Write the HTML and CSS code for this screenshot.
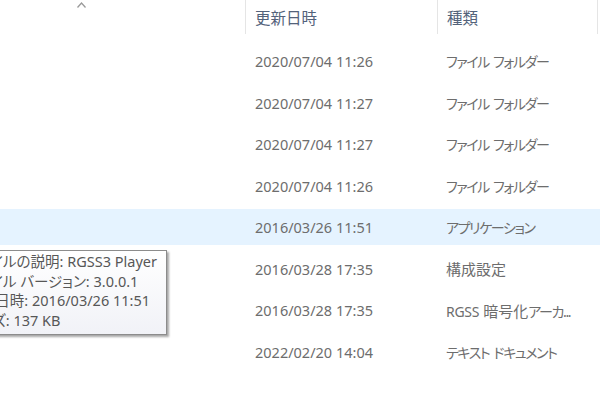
FILE: index.html
```html
<!DOCTYPE html>
<html lang="ja">
  <head>
    <meta charset="UTF-8" />
    <title>エクスプローラー</title>
    <link rel="stylesheet" href="styles.css">
  </head>
  <body>
    <div class="explorer">
      <div class="header">
        <div class="col-name">
          <svg class="sort-caret" width="9" height="6" viewBox="0 0 9 6">
            <polyline points="0.5,5.5 4.5,1 8.5,5.5" fill="none" stroke="#9a9a9a" stroke-width="1.3" />
          </svg>
        </div>
        <div class="col-date head-cell">更新日時</div>
        <div class="col-type head-cell">種類</div>
        <div class="col-rest head-cell"></div>
      </div>

      <div class="rows">
        <div class="row">
          <div class="col-name"></div>
          <div class="col-date">2020/07/04 11:26</div>
          <div class="col-type">ファイル フォルダー</div>
        </div>
        <div class="row">
          <div class="col-name"></div>
          <div class="col-date">2020/07/04 11:27</div>
          <div class="col-type">ファイル フォルダー</div>
        </div>
        <div class="row">
          <div class="col-name"></div>
          <div class="col-date">2020/07/04 11:27</div>
          <div class="col-type">ファイル フォルダー</div>
        </div>
        <div class="row">
          <div class="col-name"></div>
          <div class="col-date">2020/07/04 11:26</div>
          <div class="col-type">ファイル フォルダー</div>
        </div>
        <div class="row hover">
          <div class="col-name"></div>
          <div class="col-date">2016/03/26 11:51</div>
          <div class="col-type">アプリケーション</div>
        </div>
        <div class="row">
          <div class="col-name"></div>
          <div class="col-date">2016/03/28 17:35</div>
          <div class="col-type"><span class="kanji">構成設定</span></div>
        </div>
        <div class="row">
          <div class="col-name"></div>
          <div class="col-date">2016/03/28 17:35</div>
          <div class="col-type"><span class="latin">RGSS</span> <span class="kanji">暗号化</span>アーカ...</div>
        </div>
        <div class="row">
          <div class="col-name"></div>
          <div class="col-date">2022/02/20 14:04</div>
          <div class="col-type">テキスト ドキュメント</div>
        </div>
      </div>

      <!-- ツールチップ (ホバー中のファイル) -->
      <div class="tooltip">
        <p>ファイルの説明: RGSS3 Player</p>
        <p>ファイル バージョン: 3.0.0.1</p>
        <p>作成日時: 2016/03/26 11:51</p>
        <p>サイズ: 137 KB</p>
      </div>
    </div>
  </body>
</html>
```

FILE: styles.css
```css
body {
  margin: 0;
  background: #ffffff;
  font-family: "Noto Sans", "Noto Sans CJK JP", sans-serif;
  font-feature-settings: "palt";
  overflow: hidden;
}
.explorer {
  position: relative;
  width: 600px;
  height: 400px;
}
.header {
  display: grid;
  grid-template-columns: 245px 192px 160px 3px;
  height: 36px;
  margin-bottom: 7px;
}
.header .col-name {
  display: flex;
  align-items: flex-start;
  padding-left: 77px;
}
.sort-caret {
  margin-top: 2px;
}
.head-cell {
  border-left: 1px solid #e5e5e5;
  height: 34px;
  display: flex;
  align-items: center;
  padding-left: 9px;
  font-size: 15.5px;
  color: #53627a;
}
.rows {
  display: flex;
  flex-direction: column;
  gap: 5.5px;
}
.row {
  display: grid;
  grid-template-columns: 245px 192px 1fr;
  height: 36px;
  align-items: center;
  color: #6d6d6d;
}
.row.hover {
  background-color: #e5f3ff;
}
.row .col-date {
  padding-left: 10px;
  font-size: 14.5px;
}
.row .col-type {
  padding-left: 9px;
  font-size: 14px;
  letter-spacing: -1.4px;
  word-spacing: 2px;
  white-space: nowrap;
}
.kanji {
  font-size: 15px;
  letter-spacing: 0;
}
.latin {
  letter-spacing: -0.3px;
}
.tooltip {
  position: absolute;
  top: 250px;
  right: 433px;
  padding: 1px 9px 4px 6px;
  background: linear-gradient(#ffffff, #f1f2f7);
  border: 1px solid #8c8c8c;
  box-shadow: 2px 2px 2px rgba(0, 0, 0, 0.35);
  font-size: 14.5px;
  color: #575757;
  white-space: nowrap;
}
.tooltip p {
  margin: 0;
  line-height: 19.5px;
}
```
